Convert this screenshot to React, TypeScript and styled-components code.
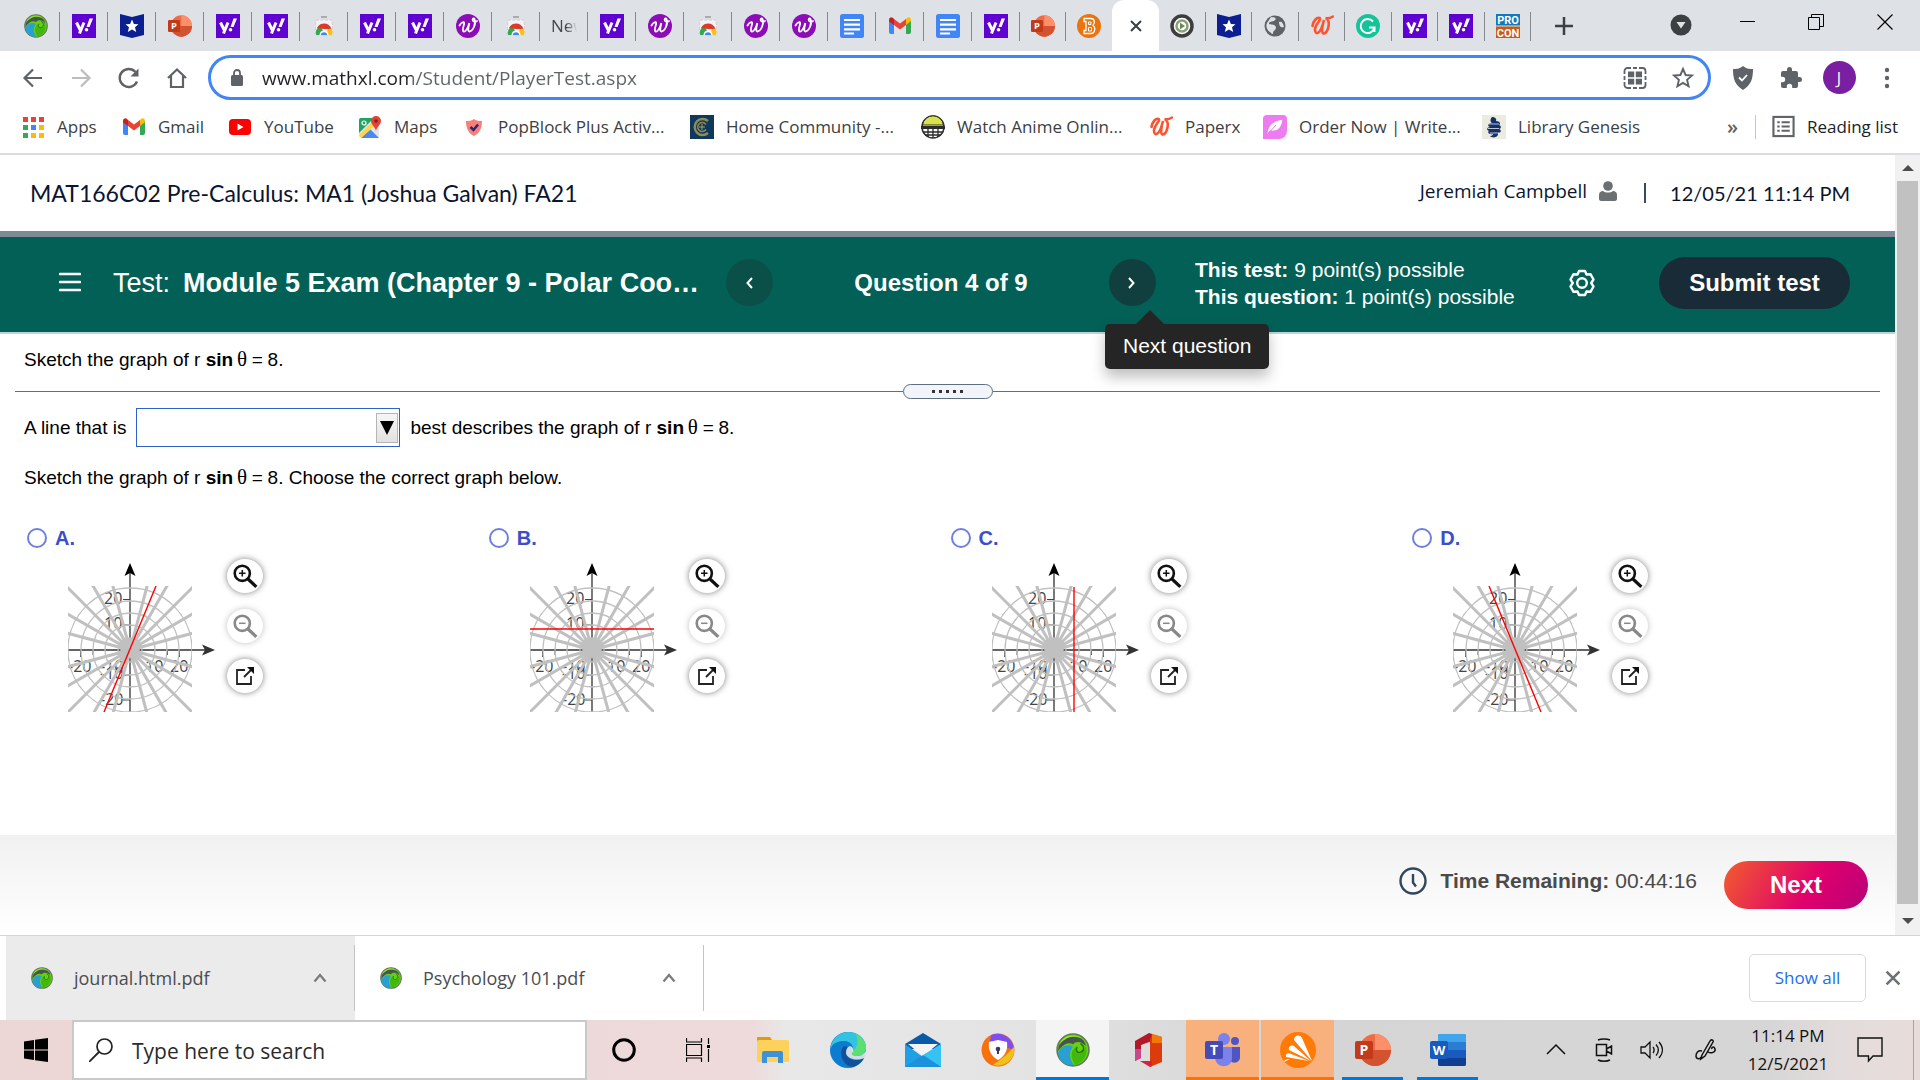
import React from "react";
import styled, { createGlobalStyle, css } from "styled-components";

const ui = `"Segoe UI", "Open Sans", "Noto Sans", sans-serif`;
const arial = `"Liberation Sans", Arial, sans-serif`;

const GlobalStyle = createGlobalStyle`
  *, *::before, *::after { box-sizing: border-box; }
  body { margin: 0; background: #fff; font-family: ${ui}; color: #202124; }
  button, input, select { font: inherit; color: inherit; margin: 0; }
  button { border: 0; padding: 0; background: none; cursor: pointer; }
  svg { display: block; flex: none; }
  p, h1, h2 { margin: 0; font-weight: 400; }
`;

const Screen = styled.div`
  min-height: 100vh;
  display: flex;
  flex-direction: column;
`;

/* ---------- browser chrome ---------- */

const TabStrip = styled.div`
  display: flex;
  align-items: stretch;
  height: 51px;
  padding-left: 12px;
  background: #dee1e6;
`;

const TabGroup = styled.div<{ $w: number }>`
  display: flex;
  width: ${(p) => p.$w}px;
  > button { flex: 1; min-width: 0; }
`;

const Tab = styled.button<{ $last?: boolean }>`
  display: flex;
  align-items: center;
  justify-content: center;
  background: linear-gradient(#85888c, #85888c) right 0 top 12px / 1px 29px no-repeat;
  ${(p) => p.$last && css`background: none;`}
`;

const TabText = styled.span`
  width: 26px;
  overflow: hidden;
  white-space: nowrap;
  font-size: 17px;
  line-height: 24px;
  color: #45494d;
  mask-image: linear-gradient(90deg, #000 60%, transparent);
`;

const ActiveTab = styled(Tab)`
  background: #fff;
  border-radius: 12px 12px 0 0;
`;

const NewTab = styled.button`
  display: flex;
  align-items: center;
  justify-content: center;
  width: 66px;
`;

const WindowButtons = styled.div`
  display: flex;
  align-items: center;
  margin-left: auto;
  padding-right: 1px;
`;

const WindowButton = styled.button<{ $w: number }>`
  display: flex;
  align-items: center;
  justify-content: center;
  width: ${(p) => p.$w}px;
  height: 44px;
  align-self: flex-start;
`;

const Toolbar = styled.div`
  display: flex;
  align-items: center;
  height: 53px;
  padding: 0 9px;
`;

const ToolButton = styled.button`
  display: flex;
  align-items: center;
  justify-content: center;
  width: 48px;
  height: 40px;
`;

const AddressBar = styled.div`
  flex: 1;
  display: flex;
  align-items: center;
  height: 45px;
  margin: 0 8px 0 7px;
  padding: 0 1px 0 19px;
  border: 3px solid #4285f4;
  border-radius: 23px;
`;

const AddressInput = styled.input`
  flex: 1;
  min-width: 0;
  margin-left: 18px;
  padding: 0;
  border: 0;
  outline: 0;
  font-size: 19px;
  line-height: 32px;
  background: linear-gradient(90deg, #202124 150px, #5f6368 150px);
  background-clip: text;
  -webkit-text-fill-color: transparent;
`;

const Avatar = styled.span`
  display: grid;
  place-items: center;
  width: 33px;
  height: 33px;
  border-radius: 50%;
  background: #7b1fa2;
  color: #fff;
  font-size: 16px;
`;

const Bookmarks = styled.nav`
  display: flex;
  align-items: center;
  height: 51px;
  padding: 0 22px 4px 21px;
  border-bottom: 2px solid #dadce0;
`;

const Bookmark = styled.a<{ $w: number }>`
  display: flex;
  align-items: center;
  gap: 12px;
  width: ${(p) => p.$w}px;
  font-size: 17px;
  line-height: 24px;
  color: #3c4043;
  text-decoration: none;
  white-space: nowrap;
`;

const BookmarkEnd = styled.div`
  display: flex;
  align-items: center;
  margin-left: auto;
`;

const More = styled.button`
  font-size: 20px;
  font-weight: 600;
  line-height: 24px;
  width: 44px;
  text-align: left;
  padding-left: 16px;
  color: #5f6368;
`;

const ReadingList = styled.button`
  display: flex;
  align-items: center;
  gap: 12px;
  height: 24px;
  padding-left: 16px;
  border-left: 1px solid #c4c7cb;
  font-size: 17px;
  line-height: 24px;
`;

/* ---------- page ---------- */

const Viewport = styled.div`
  flex: 1;
  display: flex;
`;

const Page = styled.div`
  flex: 1;
  min-width: 0;
  display: flex;
  flex-direction: column;
`;

const ScrollTrack = styled.div`
  width: 25px;
  display: flex;
  flex-direction: column;
  align-items: center;
  background: #f1f1f1;
`;

const ScrollArrow = styled.button<{ $h: number }>`
  display: grid;
  place-items: center;
  height: ${(p) => p.$h}px;
  width: 100%;
`;

const ScrollThumb = styled.div`
  flex: 1;
  width: 21px;
  background: #c1c1c1;
`;

const CourseHeader = styled.header`
  display: flex;
  align-items: center;
  justify-content: space-between;
  height: 82px;
  padding: 0 45px 0 30px;
  border-bottom: 6px solid #7e8a95;
  font-family: Lato, sans-serif;
  font-size: 20px;
  line-height: 28px;
  color: #0b1530;
`;

const CourseName = styled.h1`
  font-size: 23px;
`;

const UserInfo = styled.div`
  display: flex;
  align-items: center;
`;

const UserName = styled.span`
  display: flex;
  align-items: center;
  gap: 12px;
  margin-right: 27px;
  padding-bottom: 4px;
  font-family: ${ui};
  font-size: 19px;
`;

const Stamp = styled.span`
  margin-left: 24px;
`;

const Bar = styled.span`
  width: 2px;
  height: 20px;
  background: #3b4860;
`;

const TestBar = styled.div`
  display: grid;
  grid-template-columns: 1fr 430px 739px;
  align-items: center;
  height: 97px;
  padding-bottom: 4px;
  border-bottom: 2px solid #bed3d3;
  background: #036056;
  color: #fff;
  font-family: ${arial};
  font-weight: 700;
  font-size: 24px;
  line-height: 28px;
`;

const TestTitle = styled.div`
  display: flex;
  align-items: center;
  min-width: 0;
  padding-left: 59px;
  font-size: 27px;
  line-height: 32px;
  white-space: nowrap;
`;

const TestLabel = styled.span`
  margin: 0 13px 0 32px;
  font-weight: 400;
`;

const QuestionNav = styled.div`
  display: flex;
  align-items: center;
  justify-content: space-between;
`;

const RoundButton = styled.button<{ $dim?: boolean }>`
  position: relative;
  display: grid;
  place-items: center;
  width: 47px;
  height: 47px;
  border-radius: 50%;
  background: ${(p) => (p.$dim ? "#0a5049" : "#113f40")};
`;

const Tooltip = styled.span`
  position: absolute;
  top: 65px;
  left: -4px;
  padding: 10px 18px 11px;
  border-radius: 5px;
  background: #252525;
  box-shadow: 0 8px 14px rgba(0, 0, 0, 0.25);
  font-size: 21px;
  line-height: 24px;
  font-weight: 400;
  white-space: nowrap;
  &::before {
    content: "";
    position: absolute;
    left: 31px;
    bottom: 100%;
    border: 14px solid transparent;
    border-top: 0;
    border-bottom-color: #252525;
  }
`;

const TestInfo = styled.div`
  display: flex;
  align-items: center;
  padding: 0 45px 0 39px;
`;

const Points = styled.div`
  flex: 1;
  font-size: 21px;
  line-height: 27px;
  span { font-weight: 400; }
`;

const SubmitButton = styled.button`
  width: 191px;
  height: 52px;
  margin-left: 63px;
  border-radius: 26px;
  background: #182b36;
`;

const Question = styled.main`
  flex: 1;
  padding: 14px 24px 0;
  font-family: ${arial};
  font-size: 19px;
  line-height: 24px;
  color: #000;
`;

const Theta = styled.span`
  font-family: "Liberation Serif", serif;
  font-size: 21px;
  line-height: 20px;
`;

const Divider = styled.div`
  display: flex;
  align-items: center;
  margin: 12px -9px 9px -9px;
  &::before, &::after {
    content: "";
    flex: 1;
    height: 1px;
    background: #5c7082;
  }
`;

const Handle = styled.button`
  display: flex;
  align-items: center;
  justify-content: center;
  gap: 4px;
  width: 90px;
  height: 15px;
  border: 1px solid #5c7082;
  border-radius: 8px;
  background: #f2f4f9;
`;

const Dot = styled.i`
  width: 3px;
  height: 3px;
  background: #333;
`;

const AnswerLine = styled.div`
  display: flex;
  align-items: center;
  gap: 10px;
`;

const SelectBox = styled.span`
  display: grid;
  width: 264px;
  height: 39px;
  align-items: center;
`;

const AnswerSelect = styled.select`
  grid-area: 1 / 1;
  width: 100%;
  height: 100%;
  appearance: none;
  border: 1px solid #2f62c9;
  border-radius: 0;
  background: #fff;
`;

const SelectArrow = styled.span`
  grid-area: 1 / 1;
  justify-self: end;
  display: grid;
  place-items: center;
  width: 22px;
  height: 30px;
  margin-right: 2px;
  border: 1px solid #b5b5b5;
  background: linear-gradient(#f6f6f6, #e2e2e2);
  pointer-events: none;
`;

const Prompt = styled.p`
  margin-top: 19px;
`;

const Choices = styled.div`
  display: grid;
  grid-template-columns: repeat(4, 1fr);
  margin-top: 36px;
`;

const ChoiceLabel = styled.label`
  display: flex;
  align-items: center;
  gap: 8px;
  padding-left: 3px;
  font-size: 20px;
  font-weight: 700;
  color: #3a4fc8;
`;

const Radio = styled.input`
  appearance: none;
  width: 20px;
  height: 20px;
  border: 2px solid #6f80dc;
  border-radius: 50%;
  background: #fff;
`;

const ChoiceBody = styled.div`
  display: flex;
  gap: 9px;
  margin: 9px 0 0 42px;
`;

const GraphTools = styled.div`
  display: flex;
  flex-direction: column;
  gap: 16px;
`;

const GraphTool = styled.button<{ $off?: boolean }>`
  display: grid;
  place-items: center;
  width: 36px;
  height: 34px;
  border-radius: 50%;
  background: #fff;
  box-shadow: 0 0 6px rgba(0, 0, 0, ${(p) => (p.$off ? 0.25 : 0.5)});
`;

const PageFooter = styled.footer`
  display: flex;
  align-items: center;
  justify-content: flex-end;
  height: 100px;
  padding: 0 27px 0 0;
  background: linear-gradient(#f1f1f1, #fff);
  font-family: ${arial};
  font-size: 21px;
  line-height: 24px;
  color: #4a4a4a;
`;

const Timer = styled.div`
  display: flex;
  align-items: center;
  margin-right: 27px;
  padding-bottom: 9px;
  strong { margin: 0 6px 0 13px; }
`;

const NextButton = styled.button`
  width: 144px;
  height: 48px;
  border-radius: 24px;
  background: linear-gradient(120deg, #f05532 5%, #e0006c 60%, #b8007a);
  color: #fff;
  font-size: 24px;
  font-weight: 700;
`;

/* ---------- downloads ---------- */

const Downloads = styled.div`
  display: flex;
  align-items: center;
  height: 85px;
  padding: 0 18px 0 6px;
  border-top: 1px solid #d5d5d5;
  font-size: 18px;
  line-height: 24px;
  color: #4a4d51;
`;

const Download = styled.button<{ $on?: boolean }>`
  display: flex;
  align-items: center;
  align-self: stretch;
  width: 349px;
  padding: 0 28px 0 25px;
  background:
    linear-gradient(#c4c4c4, #c4c4c4) right 0 top 9px / 1px 66px no-repeat,
    ${(p) => (p.$on ? "#ebebeb" : "#fff")};
  span { flex: 1; margin-left: 21px; text-align: left; }
`;

const ShowAll = styled.button`
  width: 117px;
  height: 48px;
  margin: 0 18px 0 auto;
  border: 1px solid #dadce0;
  border-radius: 5px;
  font-size: 17px;
  color: #1a6fe8;
`;

/* ---------- taskbar ---------- */

const Taskbar = styled.div`
  display: flex;
  height: 60px;
  background: linear-gradient(90deg, #ecd6d6 0, #eedada 39%, #e8e8e8 41%, #e3e3e3 54%, #d5d5d5 66%, #d6d6d6 92%, #e3dcdc 96%, #e8dcda);
`;

const StartButton = styled.button`
  display: grid;
  place-items: center;
  width: 72px;
`;

const SearchBox = styled.label`
  display: flex;
  align-items: center;
  gap: 19px;
  width: 515px;
  padding: 0 15px;
  border: 2px solid #c9c9c9;
  background: #fff;
`;

const SearchInput = styled.input`
  flex: 1;
  padding: 2px 0 0;
  border: 0;
  outline: 0;
  background: none;
  font-size: 21px;
  line-height: 28px;
  &::placeholder { color: #2b2b2b; opacity: 1; }
`;

const Task = styled.button<{ $bg?: string; $line?: string; $inset?: number; $w?: number }>`
  display: grid;
  place-items: center;
  width: ${(p) => p.$w ?? 75}px;
  background:
    linear-gradient(${(p) => p.$line ?? "transparent"} 0 100%) center bottom / ${(p) => 73 - (p.$inset ?? 0) * 2}px 3px no-repeat,
    linear-gradient(${(p) => p.$bg ?? "transparent"} 0 100%) center / 73px 100% no-repeat;
`;

const Tray = styled.div`
  display: flex;
  margin-left: auto;
  margin-right: 6px;
  padding-right: 13px;
  border-right: 1px solid #a8a2a2;
`;

const TrayButton = styled.button<{ $w: number }>`
  display: grid;
  place-items: center;
  align-content: center;
  width: ${(p) => p.$w}px;
  font-size: 17px;
  line-height: 28px;
  color: #111;
`;

/* ---------- icons ---------- */

const Svg = ({ s = 24, h, vb = 24, children }: { s?: number; h?: number; vb?: number | string; children: React.ReactNode }) => (
  <svg width={s} height={h ?? s} viewBox={typeof vb === "string" ? vb : `0 0 ${vb} ${vb}`} fill="none" aria-hidden="true">
    {children}
  </svg>
);

const Swirl = ({ s = 24 }: { s?: number }) => (
  <Svg s={s} vb={32}>
    <circle cx="16" cy="16" r="15" fill="#62d30f" stroke="#63775c" strokeWidth="1.500" />
    <path d="M2 17C2 8 9 3 17 3.500c7 .5 11 4 11 9-4-5-9-5-12-2-5-2-9 0-14 6.500z" fill="#4b5350" />
    <path d="M3 11C6 3 15 0 23 4c-8-2-14 0-20 7z" fill="#8ef01e" />
    <path d="M2 18c4-7 10-7 14-5-4 5-4 11 1 17C8 31 2 26 2 18z" fill="#2a9fd4" />
    <path d="M18 30c-5-7-4-14 1-17-1 5 2 7 5 5 3-1 4-4 3-7 4 7 1 16-9 19z" fill="#43b80c" />
    <path d="M20 13c-2 3 0 6 3 5 4-1 4-6 0-8" stroke="#246f0c" strokeWidth="1.300" />
  </Svg>
);

const Yahoo = () => (
  <Svg>
    <path fill="#5f01d1" d="M0 0h24v24H0z" />
    <path d="M4.500 8.500l3.700 7.500M12 8.500L7.500 19.500" stroke="#fff" strokeWidth="3" />
    <path d="M17.500 4.500H21l-3.500 8.500h-3z" fill="#fff" />
    <circle cx="14.500" cy="15.800" r="1.800" fill="#fff" />
  </Svg>
);

const StarBadge = () => (
  <Svg>
    <path fill="#0b1e92" d="M0 0l12 3L24 0v21l-12 3L0 21z" />
    <path fill="#fff" d="M12 5.500l1.900 4.500 4.600.3-3.500 3 1.200 4.600L12 15.400l-4.200 2.500L9 13.300l-3.500-3 4.600-.3z" />
  </Svg>
);

const PowerPoint = ({ s = 24 }: { s?: number }) => (
  <Svg s={s} vb={36}>
    <circle cx="20" cy="18" r="16" fill="#ed6c47" />
    <path d="M20 2a16 16 0 0116 16H20z" fill="#ff8f6b" />
    <path d="M4 18h32a16 16 0 01-32 0z" fill="#d35230" />
    <rect y="9" width="18" height="18" rx="2" fill="#c13b1b" />
    <text x="9" y="23" fontSize="14" fontWeight="700" textAnchor="middle" fill="#fff" fontFamily="Open Sans, sans-serif">P</text>
  </Svg>
);

const WebStore = () => (
  <Svg>
    <path d="M4 6h16l1 15H3z" fill="#f3f3f3" stroke="#cfd1d3" strokeDasharray="3 1.500" />
    <path d="M9 3h6" stroke="#a9acaf" strokeWidth="2" />
    <path d="M4 21a8.500 8.500 0 014-9l4 6-3 3z" fill="#32a852" />
    <path d="M5 14c3-6 12-6 14.500 1H12z" fill="#dc3a2c" />
    <path d="M19.500 14.500c1 2 1 4.500.500 6.500h-6l2-6z" fill="#fbc015" />
    <path d="M7.500 21a4.500 4.500 0 019 0z" fill="#fff" />
    <path d="M8.800 21a3.300 3.300 0 016.500 0z" fill="#4286f5" />
  </Svg>
);

const WScript = () => (
  <Svg>
    <circle cx="12" cy="12" r="12" fill="#8c0cb6" />
    <path d="M3.500 11.500C5 9 8 7 8.200 9c.2 2-2.700 7-.7 8.500 2 1 5-4.500 5.800-8.500-.8 4-2 8.500.2 8.500C17 17 20.500 9.500 18.500 5c-1-1.500-2.500 0-1.500 1.800.8 1.200 2.500 1.200 4 .2" stroke="#fff" strokeWidth="1.800" strokeLinecap="round" />
  </Svg>
);

const PaperW = () => (
  <Svg>
    <path d="M2.500 12C3 7 7 3 9.500 4c2.500 1-4 6-4.500 11-.3 4 2 5.500 4.500 2.500S13 10 14 6c-1.500 5-3 13-.5 13.500 3.500.5 6-7.500 5-12-.4-2-1.500-3-3-3.500 2 .5 5 0 7.500-1.500" stroke="#fb5430" strokeWidth="2.600" strokeLinecap="round" />
  </Svg>
);

const DocsIcon = () => (
  <Svg>
    <rect width="24" height="24" rx="2.500" fill="#4286f5" />
    <path d="M4 6h16M4 10.700h16M4 15.300h16M4 19.500h10" stroke="#fff" strokeWidth="2.200" />
  </Svg>
);

const Gmail = () => (
  <Svg>
    <path d="M1 6v12a2 2 0 002 2h3V10z" fill="#4285f4" />
    <path d="M18 10v10h3a2 2 0 002-2V6z" fill="#34a853" />
    <path d="M18 5v6l5-4V6c0-2.500-2.500-3.500-4-2z" fill="#fbbc04" />
    <path d="M1 6v1.500L6 11V5L5 4C3.500 2.500 1 3.500 1 6z" fill="#c5221f" />
    <path d="M6 5v6l6 4.500 6-4.500V5l-6 4.500z" fill="#ea4335" />
  </Svg>
);

const BIcon = () => (
  <Svg>
    <circle cx="12" cy="12" r="12" fill="#e8750f" />
    <path d="M7 4.500h7c3.500 0 4.500 4.500 2 6.800 3 2.500 2 8.200-2 8.200H7v-3h2v-9H7z" stroke="#fff" strokeWidth="1.300" />
    <path d="M11.500 8h2.500v2.500h-2.500zM11.500 13.500h3V17h-3z" stroke="#fff" />
  </Svg>
);

const PlayRing = () => (
  <Svg>
    <circle cx="12" cy="12" r="10" fill="#fff" stroke="#3d3d3d" strokeWidth="3.500" />
    <circle cx="12" cy="12" r="5.500" stroke="#89a075" strokeWidth="2.500" />
    <path d="M10 8.500l5 3.500-5 3.500z" fill="#6f8a5a" />
  </Svg>
);

const Globe = () => (
  <Svg>
    <circle cx="12" cy="12" r="10.500" fill="#5f6368" />
    <path d="M8 3c5 0 6 2 3 4-2 1-5 0-5 3 3 1 7 0 7 4-1 3-3 2-3 6-5-2-8-6-6-11M16 8c3-1 4 1 5 5-2 1-5 0-5-5z" fill="#dee1e6" />
  </Svg>
);

const Grammarly = () => (
  <Svg>
    <circle cx="12" cy="12" r="12" fill="#15c39a" />
    <path d="M17 7.500a7 7 0 101.500 6H13M18.500 13.500V18" stroke="#fff" strokeWidth="2" />
  </Svg>
);

const ProCon = () => (
  <Svg>
    <path fill="#1279bd" d="M0 0h24v11.500H0z" />
    <path fill="#cb5a17" d="M0 12.500h24V24H0z" />
    <g fill="#fff" fontSize="11" fontWeight="700" textAnchor="middle" fontFamily="Roboto, sans-serif">
      <text x="12" y="9.500">PRO</text>
      <text x="12" y="22.500">CON</text>
    </g>
  </Svg>
);

const AppsGrid = () => (
  <Svg>
    {["#ea4335", "#ea4335", "#ea4335", "#34a853", "#4285f4", "#fbbc04", "#34a853", "#fbbc04", "#fbbc04"].map((c, i) => (
      <rect key={i} x={2 + (i % 3) * 8} y={2 + Math.floor(i / 3) * 8} width="5" height="5" fill={c} />
    ))}
  </Svg>
);

const YouTube = () => (
  <Svg>
    <rect x="1" y="4" width="22" height="16" rx="4" fill="#f00" />
    <path d="M9.500 8.500l6 3.500-6 3.500z" fill="#fff" />
  </Svg>
);

const MapsIcon = () => (
  <Svg>
    <rect x="1" y="3" width="20" height="20" rx="2" fill="#e5e5e5" />
    <path d="M1 5a2 2 0 012-2h13L1 18z" fill="#1fa463" />
    <path d="M3 23l9-9 9 9z" fill="#4a89f3" />
    <path d="M1 20L15 6l4 3L3 23z" fill="#fdd54b" />
    <path d="M18 1a5 5 0 015 5c0 4-4 5-5 10-1-5-5-6-5-10a5 5 0 015-5z" fill="#e14338" />
    <circle cx="18" cy="6" r="1.800" fill="#8a1c14" />
    <circle cx="6" cy="8" r="2" stroke="#fff" strokeWidth="1.200" />
  </Svg>
);

const PopBlock = () => (
  <Svg>
    <path d="M12 4c3 2 5 2 8 2 0 7-2 12-8 15C6 18 4 13 4 6c3 0 5 0 8-2z" fill="#f87f7c" />
    <path d="M8.500 12l3 3L16 9.500" stroke="#262c6b" strokeWidth="2.500" />
  </Svg>
);

const HomeC = () => (
  <Svg>
    <path fill="#10375c" d="M0 0h24v24H0z" />
    <path d="M18 6a8 8 0 100 12" stroke="#8f8b55" strokeWidth="2.500" />
    <path d="M16 9.500a4.500 4.500 0 100 5" stroke="#8f8b55" strokeWidth="1.500" />
    <path d="M9 12h6M12 9v6" stroke="#a9a35c" />
  </Svg>
);

const Anime = () => (
  <Svg>
    <circle cx="12" cy="12" r="11" fill="#fff" stroke="#2c2c2c" strokeWidth="1.500" />
    <path d="M1.500 10a10.600 10.600 0 0121 0z" fill="#dbe04c" stroke="#2c2c2c" />
    <path d="M0 11h24v3H0z" fill="#2c2c2c" />
    <path d="M2 17h20M4 20h16M7 13v9M12 13v10M17 13v9" stroke="#2c2c2c" strokeWidth="1.300" />
  </Svg>
);

const Feather = () => (
  <Svg>
    <path d="M4 0h16a4 4 0 014 4v12a8 8 0 01-8 8H0V4a4 4 0 014-4z" fill="#ee7bf0" />
    <path d="M4 20c0-8 4-14 16-16-1 9-5 13-13 12zM4 20l9-10" fill="#fff" stroke="#e879ee" />
  </Svg>
);

const Library = () => (
  <Svg>
    <path fill="#ecebdf" d="M0 0h24v24H0z" />
    <path d="M10 2c3 0 5 2 4 4 4 0 5 3 3 4 3 1 2 4 0 4 3 1 2 4-1 4 1 4-5 6-8 3 2 0 3-1 3-2-4 1-6-2-4-3-3-1-2-4 1-4-3-1-2-4 2-4-2-1-2-4 0-6z" fill="#12306c" />
    <path d="M7 9h10M6 13.500h11M8 18h9" stroke="#ecebdf" strokeWidth=".8" />
  </Svg>
);

const Edge = () => (
  <Svg s={36} vb={36}>
    <circle cx="18" cy="18" r="18" fill="#0c7cd0" />
    <path d="M1 13C5 3 12 0 18 0c12 0 18 8 18 15 0 6-4 9-9 9-4 0-6-1-5-3 3-5 0-12-8-12C8 9 3 11 1 16z" fill="#31c3e0" />
    <path d="M26 2c7 4 10 9 10 13 0 6-4 9-9 9-4 0-6-1-5-3 3-4 8-8 4-19z" fill="#5bdf72" />
    <path d="M14 14c-5 4-4 18 8 21 5-1 10-5 12-9-8 4-17 2-18-5-.3-3 1-5 2-6z" fill="#12509c" />
    <path d="M23 21c-1 2 1 3 4 3 4 0 6-1 9-5v6c-8 5-19 2-20-4 0-3 1-6 4-7 3 1 4 4 3 7z" fill="#e7e7e7" opacity=".9" />
    <path d="M22 20c-1 3 1 4 5 4 5 0 8-3 9-7v-2c0 6-4 9-9 9z" fill="#5bdf72" />
  </Svg>
);

const Folder = () => (
  <Svg s={34} vb={34}>
    <path d="M1 4h13l2 3v8H1z" fill="#dd9c0b" />
    <rect x="1" y="7" width="32" height="22" rx="1.500" fill="#fdd15c" />
    <path d="M6 20a2 2 0 012-2h17a2 2 0 012 2v10h-5v-6H11v6H6z" fill="#3c91d8" />
  </Svg>
);

const Mail = () => (
  <Svg s={36} vb={36}>
    <path d="M0 12L18 1l18 11-4 5H4z" fill="#0a5aa8" />
    <path d="M3 12h30L18 24z" fill="#f4f4f4" />
    <path d="M0 12l18 13L36 12v23H0z" fill="#1f9fe4" />
    <path d="M36 12v23L18 23z" fill="#35c3f3" />
    <path d="M36 35H0l18-12z" fill="#1b90dd" />
  </Svg>
);

const SecureBrowser = () => (
  <Svg s={34} vb={34}>
    <circle cx="17" cy="17" r="16.500" fill="#f7720f" />
    <path d="M10 2c10-4 22 2 23 15L19 12 9 8z" fill="#7e4ff0" />
    <path d="M33 14c2 12-9 21-21 18l12-9z" fill="#eec11b" />
    <path d="M8 9l9-2 9 2c1 8-2 14-9 18C10 23 7 17 8 9z" fill="#fff" />
    <circle cx="17" cy="16" r="2.300" fill="#323c5c" />
    <path d="M17 16v5" stroke="#323c5c" strokeWidth="2" />
  </Svg>
);

const Office = () => (
  <Svg s={36} vb={36}>
    <path d="M5 9L19 1l3 1v7l-11 4v13l-6 3z" fill="#b4172a" />
    <path d="M19 1l13 4v25l-12 5V8l2-6z" fill="#dc3c0b" />
    <path d="M22 2l10 3v6H22z" fill="#f07a08" />
    <path d="M5 17h6v9l-6 3z" fill="#c7488c" />
    <path d="M10 29h12v5l-2 1z" fill="#d8203c" />
  </Svg>
);

const Teams = () => (
  <Svg s={36} vb={36}>
    <circle cx="30" cy="9" r="4" fill="#4f56c4" />
    <path d="M25 15h10v10c0 7-9 7-10 3z" fill="#4f56c4" />
    <circle cx="19" cy="7" r="6" fill="#7b83eb" />
    <path d="M10 15h17v11c0 11-16 11-17 0z" fill="#7b83eb" />
    <rect y="9" width="18" height="18" rx="2" fill="#464bb8" />
    <text x="9" y="23" fontSize="14" fontWeight="700" textAnchor="middle" fill="#fff" fontFamily="Open Sans, sans-serif">T</text>
  </Svg>
);

const Avast = () => (
  <Svg s={36} vb={36}>
    <circle cx="18" cy="18" r="18" fill="#ff7b05" />
    <path d="M14 8c0-5 6-6 8-2l10 23zM9 18c-1-4 3-6 6-3l16 14zM6 25c-1-3 2-5 5-3l18 7zM4 30c1-3 4-3 6-3z" fill="#fff" />
  </Svg>
);

const Word = () => (
  <Svg s={36} vb={36}>
    <rect x="8" y="2" width="28" height="32" rx="2" fill="#2b7cd3" />
    <path d="M8 10V4a2 2 0 012-2h24a2 2 0 012 2v6z" fill="#41a5ee" />
    <path d="M8 18h28v8H8z" fill="#185abd" />
    <path d="M8 26h28v6a2 2 0 01-2 2H10a2 2 0 01-2-2z" fill="#103f91" />
    <rect y="9" width="18" height="18" rx="2" fill="#185abd" />
    <text x="9" y="23" fontSize="13" fontWeight="700" textAnchor="middle" fill="#fff" fontFamily="Open Sans, sans-serif">W</text>
  </Svg>
);

const Chevron = () => (
  <Svg s={14} vb={14}>
    <path d="M1.500 10.500L7 4l5.500 6.500" stroke="#777a7e" strokeWidth="2.200" />
  </Svg>
);

const Caret = ({ d, s = 12 }: { d: string; s?: number }) => (
  <Svg s={s} vb={12}>
    <path d={d} fill="#4c4c4c" />
  </Svg>
);

/* ---------- data ---------- */

const iconFor: Record<string, React.ReactNode> = {
  swirl: <Swirl />,
  yahoo: <Yahoo />,
  star: <StarBadge />,
  ppt: <PowerPoint />,
  store: <WebStore />,
  w: <WScript />,
  docs: <DocsIcon />,
  gmail: <Gmail />,
  b: <BIcon />,
  ring: <PlayRing />,
  globe: <Globe />,
  paperx: <PaperW />,
  g: <Grammarly />,
  procon: <ProCon />,
  new: <TabText>New</TabText>,
};

const tabsA = "swirl yahoo star ppt yahoo yahoo store yahoo yahoo w store new yahoo w store w w docs gmail docs yahoo".split(" ");
const tabsC = "ring star globe paperx g yahoo yahoo procon".split(" ");

const bookmarks: [string, React.ReactNode, number][] = [
  ["Apps", <AppsGrid />, 101],
  ["Gmail", <Gmail />, 106],
  ["YouTube", <YouTube />, 130],
  ["Maps", <MapsIcon />, 104],
  ["PopBlock Plus Activ...", <PopBlock />, 228],
  ["Home Community -...", <HomeC />, 231],
  ["Watch Anime Onlin...", <Anime />, 228],
  ["Paperx", <PaperW />, 114],
  ["Order Now | Write...", <Feather />, 219],
  ["Library Genesis", <Library />, 160],
];

type Line = [number, number, number, number];
const choices: { id: string; line: Line }[] = [
  { id: "A", line: [26, -64, -26, 62] },
  { id: "B", line: [-62, -21, 62, -21] },
  { id: "C", line: [20, -63, 20, 62] },
  { id: "D", line: [-26, -64, 26, 62] },
];

const rayAngles = [15, 30, 45, 60, 75, 105, 120, 135, 150, 165];

const PolarGraph = ({ line }: { line: Line }) => (
  <svg width="152" height="155" viewBox="0 0 152 155" fill="none" role="img" aria-label="Polar graph">
    <path d="M64 14v139M2 91h138" stroke="#333" strokeWidth="1.300" />
    <path d="M64 4l5.500 13-5.500-3-5.500 3z" fill="#000" />
    <path d="M149 91l-13 5.500 3-5.500-3-5.500z" fill="#333" />
    <path d="M57 40.500h7M57 66h7M57 116h7M57 141h7M14.500 91v7M27 91v5M101.500 91v5M113.500 91v7" stroke="#444" />
    <g fontFamily="Open Sans, sans-serif" fontSize="16" fill="#444">
      <text x="38" y="45">20</text>
      <text x="38" y="70">10</text>
      <text x="2" y="113">-20</text>
      <text x="34" y="113">-10</text>
      <text x="79" y="113">10</text>
      <text x="104" y="113">20</text>
      <text x="34" y="120">-10</text>
      <text x="34" y="146">-20</text>
    </g>
    <svg x="2" y="27" width="124" height="126" viewBox="-62 -64 124 126">
      {[12, 25, 37, 49, 62].map((r) => (
        <circle key={r} r={r} stroke="#c0c0c0" strokeWidth="1.300" />
      ))}
      {rayAngles.map((a) => {
        const t = (a * Math.PI) / 180;
        const x = 95 * Math.cos(t);
        const y = 95 * Math.sin(t);
        return <line key={a} x1={-x} y1={y} x2={x} y2={-y} stroke="#c0c0c0" strokeWidth="3" />;
      })}
      <circle cy="-2" r="10" fill="#c0c0c0" />
      <line x1={line[0]} y1={line[1]} x2={line[2]} y2={line[3]} stroke="#f00" strokeWidth="1.400" />
    </svg>
  </svg>
);

const Lens = ({ minus }: { minus?: boolean }) => (
  <Svg s={26}>
    <g stroke={minus ? "#888" : "#111"}>
      <circle cx="9.500" cy="9.500" r="7" strokeWidth="2.400" />
      <path d={minus ? "M6.500 9.500h6" : "M6.500 9.500h6M9.500 6.500v6"} strokeWidth="1.400" />
      <path d="M14.500 14.500l8 7.500" strokeWidth="3" />
    </g>
  </Svg>
);

const Formula = () => (
  <>
    r <b>sin</b>{"\u2009"}<Theta>θ</Theta>{"\u2005=\u2005"}8.
  </>
);

const TabButtons = ({ names }: { names: string[] }) => (
  <>
    {names.map((n, i) => (
      <Tab key={i} aria-label={n + " tab"}>{iconFor[n]}</Tab>
    ))}
  </>
);

const grey = "#5f6368";

export default function App() {
  return (
    <Screen>
      <GlobalStyle />
      <TabStrip>
        <TabGroup $w={1008}><TabButtons names={tabsA} /></TabGroup>
        <TabGroup $w={92}>
          <TabButtons names={["ppt"]} />
          <Tab $last aria-label="b tab">{iconFor.b}</Tab>
        </TabGroup>
        <TabGroup $w={47}>
          <ActiveTab aria-label="Close tab">
            <Svg s={14} vb={14}><path d="M2 2l10 10M12 2L2 12" stroke="#3c4043" strokeWidth="2" /></Svg>
          </ActiveTab>
        </TabGroup>
        <TabGroup $w={372}><TabButtons names={tabsC} /></TabGroup>
        <NewTab aria-label="New tab">
          <Svg s={18} vb={18}><path d="M9 0v18M0 9h18" stroke="#3c4043" strokeWidth="2.500" /></Svg>
        </NewTab>
        <WindowButtons>
          <WindowButton $w={66} aria-label="Search tabs">
            <Svg s={22} h={30} vb="0 0 22 30">
              <circle cx="11" cy="18" r="10.500" fill="#3c4043" />
              <path d="M6.500 15h9L11 21.500z" fill="#dee1e6" />
            </Svg>
          </WindowButton>
          <WindowButton $w={68} aria-label="Minimize"><Svg s={16} vb={16}><path d="M0 7.500h15" stroke="#000" /></Svg></WindowButton>
          <WindowButton $w={68} aria-label="Restore">
            <Svg s={16} vb={16}><path d="M.5 3.500h11v12H.5zM3.500 3V.5h12v12H12" stroke="#000" /></Svg>
          </WindowButton>
          <WindowButton $w={69} aria-label="Close"><Svg s={16} vb={16}><path d="M.5.5l15 15M15.500.5l-15 15" stroke="#000" strokeWidth="1.200" /></Svg></WindowButton>
        </WindowButtons>
      </TabStrip>

      <Toolbar>
        <ToolButton aria-label="Back"><Svg><path d="M21 12H4M12 3.500L3.500 12l8.500 8.500" stroke={grey} strokeWidth="2.200" /></Svg></ToolButton>
        <ToolButton aria-label="Forward"><Svg><path d="M3 12h17M12 3.500l8.500 8.500-8.500 8.500" stroke="#babcbe" strokeWidth="2.200" /></Svg></ToolButton>
        <ToolButton aria-label="Reload">
          <Svg><path d="M20 15.500A9 9 0 1118.500 6" stroke={grey} strokeWidth="2.400" /><path d="M21.500 2.500v8h-8z" fill={grey} /></Svg>
        </ToolButton>
        <ToolButton aria-label="Home"><Svg><path d="M3 12L12 3.500l9 8.500M6 10v11h12V10" stroke={grey} strokeWidth="2.200" /></Svg></ToolButton>
        <AddressBar>
          <Svg s={14} h={20} vb="0 0 14 20">
            <rect x="1" y="7" width="12" height="11" rx="1.500" fill={grey} />
            <path d="M4 8V5a3 3 0 016 0v3" stroke={grey} strokeWidth="1.800" />
          </Svg>
          <AddressInput aria-label="Address" defaultValue="www.mathxl.com/Student/PlayerTest.aspx" />
          <ToolButton aria-label="QR code">
            <Svg>
              <path d="M1.500 8V5a3 3 0 013-3H8M16 2h3.500a3 3 0 013 3v3M22.500 16v3a3 3 0 01-3 3H16M8 22H4.500a3 3 0 01-3-3v-3M10 2h4M10 22h4M1.500 10v4M22.500 10v4" stroke={grey} strokeWidth="1.800" />
              <path d="M5 5.500h6.200v5.700H5zM12.800 5.500H19v5.700h-6.200zM5 12.800h6.200v5.700H5zM12.800 12.800H19v5.700h-6.200z" fill={grey} />
            </Svg>
          </ToolButton>
          <ToolButton aria-label="Bookmark this page">
            <Svg><path d="M12 3l2.600 6 6.400.6-4.900 4.300 1.500 6.400L12 16.900l-5.600 3.400 1.500-6.400L3 9.600 9.400 9z" stroke={grey} strokeWidth="1.900" /></Svg>
          </ToolButton>
        </AddressBar>
        <ToolButton aria-label="Security">
          <Svg><path d="M12 0c4 3 6 3 10 3 0 10-2 16-10 21C4 19 2 13 2 3c4 0 6 0 10-3z" fill={grey} /><path d="M8 11.500l3 3L16 9" stroke="#fff" strokeWidth="1.800" /></Svg>
        </ToolButton>
        <ToolButton aria-label="Extensions">
          <Svg><path d="M20.500 11H19V7a2 2 0 00-2-2h-4V3.500a2.500 2.500 0 00-5 0V5H4a2 2 0 00-2 2v3.800h1.500a2.700 2.700 0 010 5.400H2V20a2 2 0 002 2h3.800v-1.500a2.700 2.700 0 015.400 0V22H17a2 2 0 002-2v-4h1.500a2.500 2.500 0 000-5z" fill={grey} /></Svg>
        </ToolButton>
        <ToolButton aria-label="Profile"><Avatar>J</Avatar></ToolButton>
        <ToolButton aria-label="Menu">
          <Svg>{[4, 12, 20].map((y) => <circle key={y} cx="12" cy={y} r="2.200" fill={grey} />)}</Svg>
        </ToolButton>
      </Toolbar>

      <Bookmarks>
        {bookmarks.map(([name, icon, w]) => (
          <Bookmark key={name} href="#" $w={w}>{icon}{name}</Bookmark>
        ))}
        <BookmarkEnd>
          <More>»</More>
          <ReadingList>
            <Svg s={23}>
              <rect x="1.500" y="2" width="21" height="20" stroke={grey} strokeWidth="2.200" />
              <path d="M5.500 7.500h2.500M10 7.500h8.500M5.500 12h2.500M10 12h8.500M5.500 16.500h2.500M10 16.500h8.500" stroke={grey} strokeWidth="2" />
            </Svg>
            Reading list
          </ReadingList>
        </BookmarkEnd>
      </Bookmarks>

      <Viewport>
        <Page>
          <CourseHeader>
            <CourseName>MAT166C02 Pre-Calculus: MA1 (Joshua Galvan) FA21</CourseName>
            <UserInfo>
              <UserName>
                Jeremiah Campbell
                <Svg s={18} h={20} vb="0 0 18 20">
                  <circle cx="9" cy="5" r="4.800" fill="#6c7072" />
                  <path d="M0 18v-4c0-3 2-4 4-4 3 2 7 2 10 0 2 0 4 1 4 4v4c0 1-1 2-2 2H2c-1 0-2-1-2-2z" fill="#6c7072" />
                </Svg>
              </UserName>
              <Bar />
              <Stamp>12/05/21 11:14 PM</Stamp>
            </UserInfo>
          </CourseHeader>

          <TestBar>
            <TestTitle>
              <button aria-label="Open menu">
                <Svg s={22} h={22} vb="0 0 22 22"><path d="M1 2h20M1 10h20M1 18h20" stroke="#fff" strokeWidth="2.600" strokeLinecap="round" /></Svg>
              </button>
              <TestLabel>Test:</TestLabel>
              Module 5 Exam (Chapter 9 - Polar Coo…
            </TestTitle>
            <QuestionNav>
              <RoundButton $dim aria-label="Previous question">
                <Svg s={12} vb={12}><path d="M8 1L3.500 6 8 11" stroke="#fff" strokeWidth="2" /></Svg>
              </RoundButton>
              Question 4 of 9
              <RoundButton aria-label="Next question">
                <Svg s={12} vb={12}><path d="M3 1l4.500 5L3 11" stroke="#fff" strokeWidth="2" /></Svg>
                <Tooltip>Next question</Tooltip>
              </RoundButton>
            </QuestionNav>
            <TestInfo>
              <Points>
                <div>This test: <span>9 point(s) possible</span></div>
                <div>This question: <span>1 point(s) possible</span></div>
              </Points>
              <button aria-label="Settings">
                <Svg s={28} vb={28}>
                  <path d="M11 2h6l1.500 3.500 4 -.3 3 5.300-2.300 3.500 2.300 3.500-3 5.300-4-.3L17 26h-6l-1.500-3.500-4 .3-3-5.300L4.800 14l-2.300-3.500 3-5.300 4 .3z" stroke="#fff" strokeWidth="2.400" strokeLinejoin="round" />
                  <circle cx="14" cy="14" r="4.800" stroke="#fff" strokeWidth="2.400" />
                </Svg>
              </button>
              <SubmitButton>Submit test</SubmitButton>
            </TestInfo>
          </TestBar>

          <Question>
            <p>Sketch the graph of <Formula /></p>
            <Divider>
              <Handle aria-label="Resize panes"><Dot /><Dot /><Dot /><Dot /><Dot /></Handle>
            </Divider>
            <AnswerLine>
              <label htmlFor="line-kind">A line that is</label>
              <SelectBox>
                <AnswerSelect id="line-kind" defaultValue=""><option value="" /></AnswerSelect>
                <SelectArrow><Svg s={14} vb={14}><path d="M0 0h14L7 14z" fill="#000" /></Svg></SelectArrow>
              </SelectBox>
              <span>best describes the graph of <Formula /></span>
            </AnswerLine>
            <Prompt>Sketch the graph of <Formula /> Choose the correct graph below.</Prompt>
            <Choices>
              {choices.map(({ id, line }) => (
                <div key={id}>
                  <ChoiceLabel><Radio type="radio" name="graph" value={id} />{id}.</ChoiceLabel>
                  <ChoiceBody>
                    <PolarGraph line={line} />
                    <GraphTools>
                      <GraphTool aria-label="Zoom in"><Lens /></GraphTool>
                      <GraphTool $off aria-label="Zoom out"><Lens minus /></GraphTool>
                      <GraphTool aria-label="Open graph">
                        <Svg s={20} vb={20}><path d="M10 4H2v14h14v-8M9 11l7-7" stroke="#222" strokeWidth="1.800" /><path d="M12 1h7v7z" fill="#111" /></Svg>
                      </GraphTool>
                    </GraphTools>
                  </ChoiceBody>
                </div>
              ))}
            </Choices>
          </Question>

          <PageFooter>
            <Timer>
              <Svg s={28} vb={28}><circle cx="14" cy="14" r="12.500" stroke="#33475b" strokeWidth="2.400" /><path d="M14 7v8.500l3 4" stroke="#33475b" strokeWidth="2.400" /></Svg>
              <strong>Time Remaining:</strong>
              <span>00:44:16</span>
            </Timer>
            <NextButton>Next</NextButton>
          </PageFooter>
        </Page>
        <ScrollTrack>
          <ScrollArrow $h={26} aria-label="Scroll up"><Caret d="M0 9h12L6 3z" /></ScrollArrow>
          <ScrollThumb />
          <ScrollArrow $h={31} aria-label="Scroll down"><Caret d="M0 4h12L6 10z" /></ScrollArrow>
        </ScrollTrack>
      </Viewport>

      <Downloads>
        <Download $on><Swirl s={22} /><span>journal.html.pdf</span><Chevron /></Download>
        <Download><Swirl s={22} /><span>Psychology 101.pdf</span><Chevron /></Download>
        <ShowAll>Show all</ShowAll>
        <button aria-label="Close downloads">
          <Svg s={18} vb={14}><path d="M2 2l10 10M12 2L2 12" stroke="#6d7175" strokeWidth="2" /></Svg>
        </button>
      </Downloads>

      <Taskbar>
        <StartButton aria-label="Start">
          <Svg><path d="M0 3.500L10 2v9.500H0zM11 1.800L24 0v11.500H11zM0 12.500h10V22L0 20.500zM11 12.500h13V24l-13-1.800z" fill="#000" /></Svg>
        </StartButton>
        <SearchBox>
          <Svg s={24}><circle cx="15.500" cy="8.500" r="7.500" stroke="#222" strokeWidth="1.700" /><path d="M10 14L0 24" stroke="#222" strokeWidth="1.800" /></Svg>
          <SearchInput aria-label="Search" placeholder="Type here to search" />
        </SearchBox>
        <Task $w={73} aria-label="Cortana"><Svg><circle cx="12" cy="12" r="10.300" stroke="#000" strokeWidth="3" /></Svg></Task>
        <Task aria-label="Task view">
          <Svg><path d="M.5 0v4h15V0M.5 6.500h15v11H.5zM.5 24v-4h15v4M22.500 0v6M22.500 11v13" stroke="#000" strokeWidth="1.200" /><path d="M21 7h3v3h-3z" fill="#000" /></Svg>
        </Task>
        <Task aria-label="File Explorer"><Folder /></Task>
        <Task aria-label="Edge"><Edge /></Task>
        <Task aria-label="Mail"><Mail /></Task>
        <Task aria-label="Secure Browser"><SecureBrowser /></Task>
        <Task aria-label="Web browser" $bg="#f4f4f4" $line="#0078d7"><Swirl s={34} /></Task>
        <Task aria-label="Office"><Office /></Task>
        <Task aria-label="Teams" $bg="#f8b07c" $line="#fb7308"><Teams /></Task>
        <Task aria-label="Antivirus" $bg="#f8b07c" $line="#fb7308"><Avast /></Task>
        <Task aria-label="PowerPoint" $line="#0078d7" $inset={6}><PowerPoint s={36} /></Task>
        <Task aria-label="Word" $line="#0078d7" $inset={6}><Word /></Task>
        <Tray>
          <TrayButton $w={48} aria-label="Hidden icons"><Svg s={20} vb={20}><path d="M1 14l9-9 9 9" stroke="#111" strokeWidth="1.500" /></Svg></TrayButton>
          <TrayButton $w={48} aria-label="Meet now">
            <Svg><path d="M6 2c3-1.500 9-1.500 12 0M6 22c3 1.500 9 1.500 12 0M4.500 6.500h10v11h-10zM14.500 11l5-3v8l-5-3" stroke="#111" strokeWidth="1.500" /></Svg>
          </TrayButton>
          <TrayButton $w={48} aria-label="Volume">
            <Svg><path d="M1 9h4l5-5v16l-5-5H1zM13 9c1.500 2 1.500 4 0 6M16 6.500c3 3.500 3 7.500 0 11M19 4c4.500 5 4.500 11 0 16" stroke="#111" strokeWidth="1.300" /></Svg>
          </TrayButton>
          <TrayButton $w={60} aria-label="Pen">
            <Svg><path d="M8 17L16 3c1-2 4-1 3 1l-8 14-4 3zM8 13c-4-1-6 2-6 5s4 4 5 1M14 14c3 2 8 0 7-3s-4-2-3 0" stroke="#111" strokeWidth="1.500" /></Svg>
          </TrayButton>
          <TrayButton $w={104}><span>11:14 PM</span><span>12/5/2021</span></TrayButton>
          <TrayButton $w={60} aria-label="Notifications">
            <Svg s={26} vb={26}><path d="M1 1h24v18h-9l-4.500 5v-5H1z" stroke="#111" strokeWidth="1.400" /></Svg>
          </TrayButton>
        </Tray>
      </Taskbar>
    </Screen>
  );
}
